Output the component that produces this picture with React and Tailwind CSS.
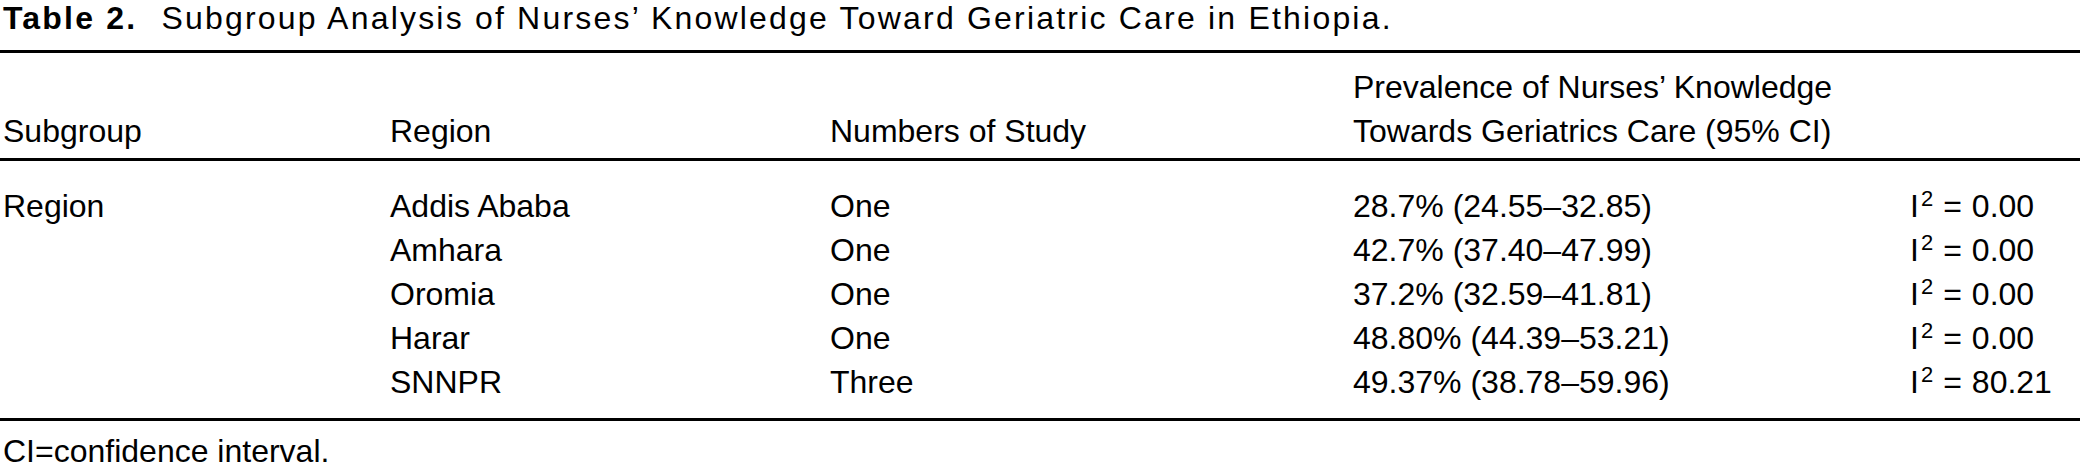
const rows = [
    { subgroup: "Region", region: "Addis Ababa", studies: "One", prevalence: "28.7% (24.55–32.85)", i2: "0.00" },
    { subgroup: "", region: "Amhara", studies: "One", prevalence: "42.7% (37.40–47.99)", i2: "0.00" },
    { subgroup: "", region: "Oromia", studies: "One", prevalence: "37.2% (32.59–41.81)", i2: "0.00" },
    { subgroup: "", region: "Harar", studies: "One", prevalence: "48.80% (44.39–53.21)", i2: "0.00" },
    { subgroup: "", region: "SNNPR", studies: "Three", prevalence: "49.37% (38.78–59.96)", i2: "80.21" },
];

const cols = "grid grid-cols-[390px_440px_523px_557px_1fr]";

const App = () => {
    return (
        <div className="w-[2080px] h-[463px] overflow-hidden bg-white text-black font-['Liberation_Sans',Arial,sans-serif] text-[32px]">
            <p className="pl-[3px] leading-[36px] whitespace-nowrap tracking-[2.2px]">
                <span className="font-bold">Table 2.</span>
                <span className="ml-[24px]">Subgroup Analysis of Nurses’ Knowledge Toward Geriatric Care in Ethiopia.</span>
            </p>

            {/* header */}
            <div className={`${cols} mt-[14px] border-t-[3px] border-black pt-[12px] pb-[5px] leading-[44px] items-end`}>
                <div className="pl-[3px]">Subgroup</div>
                <div>Region</div>
                <div>Numbers of Study</div>
                <div className="whitespace-nowrap">
                    Prevalence of Nurses’ Knowledge
                    <br />
                    Towards Geriatrics Care (95% CI)
                </div>
                <div></div>
            </div>

            {/* body */}
            <div className="border-t-[3px] border-black pt-[23px] pb-[14px] leading-[44px]">
                {rows.map((r) => (
                    <div key={r.region} className={cols}>
                        <div className="pl-[3px]">{r.subgroup}</div>
                        <div>{r.region}</div>
                        <div>{r.studies}</div>
                        <div className="whitespace-nowrap">{r.prevalence}</div>
                        <div className="whitespace-nowrap">
                            I<sup className="text-[22px] ml-[2px]">2</sup>
                            <span className="mx-[10px]">=</span>
                            {r.i2}
                        </div>
                    </div>
                ))}
            </div>

            <div className="border-t-[3px] border-black pt-[18px] pl-[3px] leading-[24px]">CI=confidence interval.</div>
        </div>
    );
};

export default App;
